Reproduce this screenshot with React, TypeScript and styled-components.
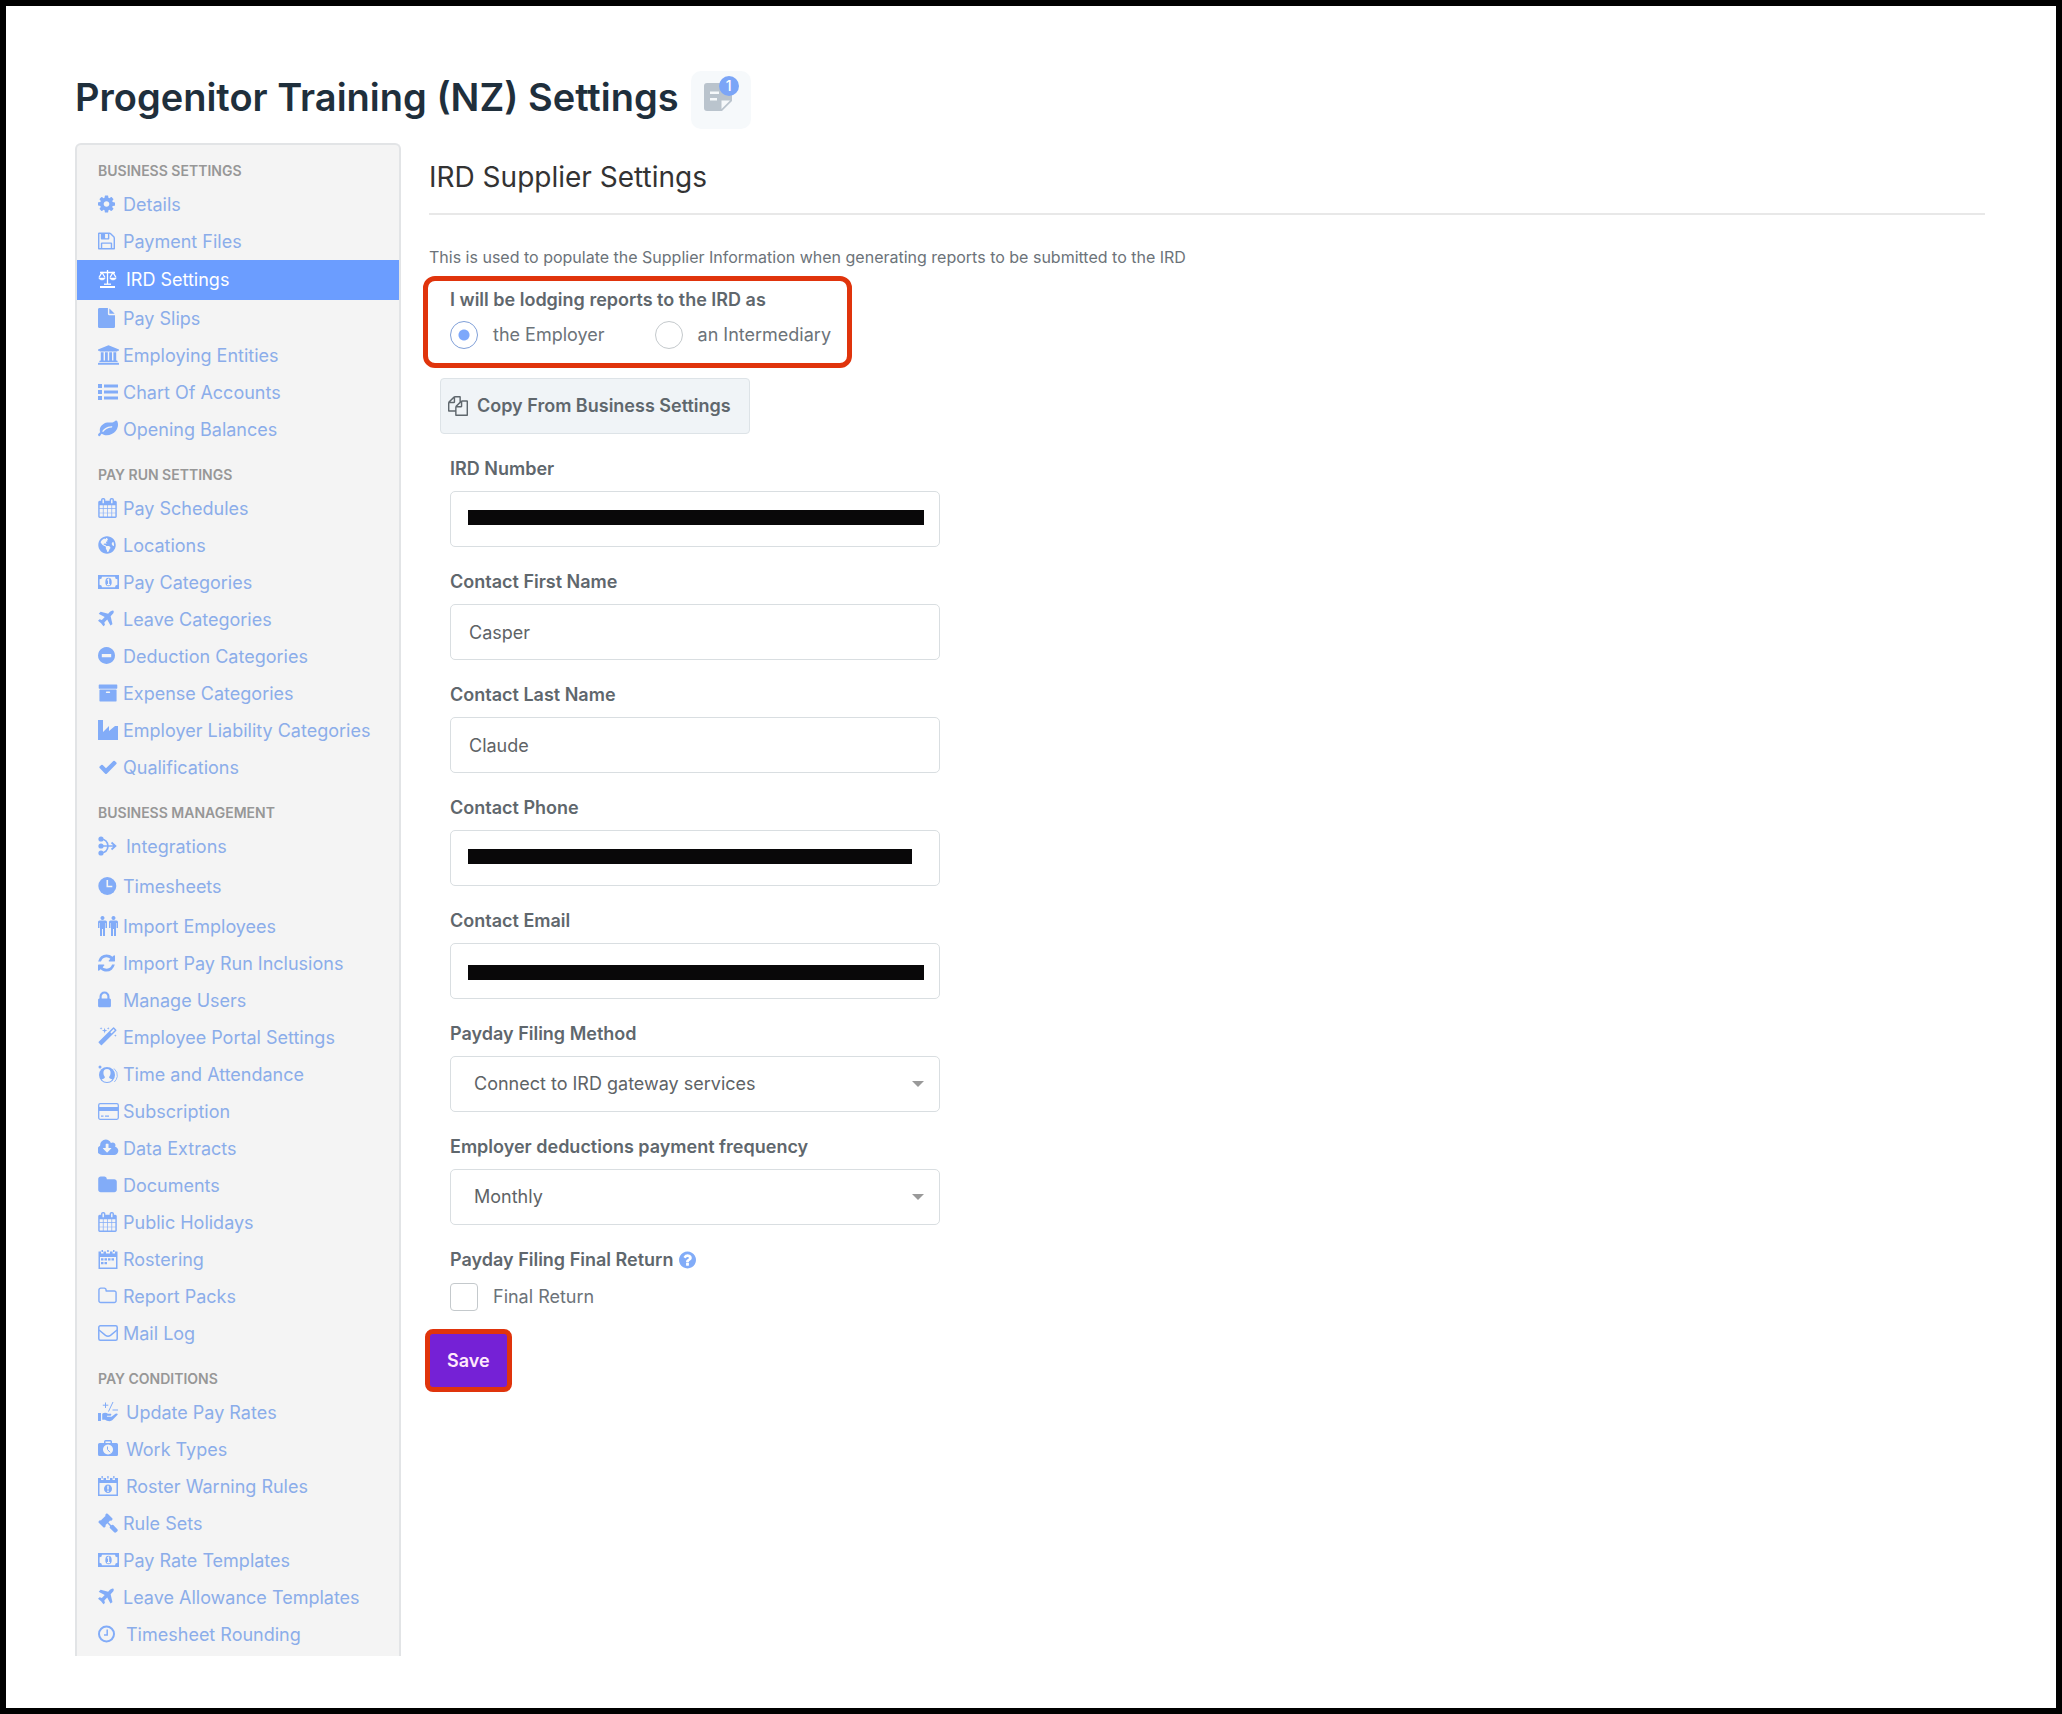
import React, { useId, useState } from 'react';
import styled, { createGlobalStyle } from 'styled-components';
import { FaGlobeAmericas } from 'react-icons/fa';

const color = {
  ink: '#1f2f3c',
  heading: '#333333',
  label: '#5f676d',
  text: '#6c7379',
  link: '#8badea',
  icon: '#82acf8',
  active: '#6b9dff',
  line: '#e2e4e6',
  panel: '#f4f4f4',
  alert: '#e0340c',
  save: '#7521d6',
};

const GlobalStyle = createGlobalStyle`
  *, *::before, *::after { box-sizing: border-box; }
  body {
    margin: 0;
    background: #ffffff;
    color: ${color.text};
    font-family: Inter, "Liberation Sans", sans-serif;
    font-size: 18px;
    line-height: 24px;
  }
  button, input, select { font: inherit; }
`;

/* ---------- icons ---------- */

const Svg = styled.svg`
  display: block;
  flex: none;
  fill: currentColor;
`;

/* Font glyphs are drawn on a 1792-unit grid; x and w trim the side bearing. */
const glyphs: Record<string, { x: number; w: number; d: string }> = {
  cog: { x: 128, w: 1536, d: 'M1152 896q0-106-75-181t-181-75-181 75-75 181 75 181 181 75 181-75 75-181zm512-109v222q0 12-8 23t-20 13l-185 28q-19 54-39 91 35 50 107 138 10 12 10 25t-9 23q-27 37-99 108t-94 71q-12 0-26-9l-138-108q-44 23-91 38-16 136-29 186-7 28-36 28h-222q-14 0-24.5-8.5t-11.5-21.5l-28-184q-49-16-90-37l-141 107q-10 9-25 9-14 0-25-11-126-114-165-168-7-10-7-23 0-12 8-23 15-21 51-66.5t54-70.5q-27-50-41-99l-183-27q-13-2-21-12.5t-8-23.5v-222q0-12 8-23t19-13l186-28q14-46 39-92-40-57-107-138-10-12-10-24 0-10 9-23 26-36 98.5-107.5t94.5-71.5q13 0 26 10l138 107q44-23 91-38 16-136 29-186 7-28 36-28h222q14 0 24.5 8.5t11.5 21.5l28 184q49 16 90 37l142-107q9-9 24-9 13 0 25 10 129 119 165 170 7 8 7 22 0 12-8 23-15 21-51 66.5t-54 70.5q26 50 41 98l183 28q13 2 21 12.5t8 23.5z' },
  floppy: { x: 128, w: 1536, d: 'M512 1536h768v-384h-768v384zm896 0h128v-896q0-14-10-38.5t-20-34.5l-281-281q-10-10-34-20t-39-10v416q0 40-28 68t-68 28h-576q-40 0-68-28t-28-68v-416h-128v1280h128v-416q0-40 28-68t68-28h832q40 0 68 28t28 68v416zm-384-928v-320q0-13-9.5-22.5t-22.5-9.5h-192q-13 0-22.5 9.5t-9.5 22.5v320q0 13 9.5 22.5t22.5 9.5h192q13 0 22.5-9.5t9.5-22.5zm640 32v928q0 40-28 68t-68 28h-1344q-40 0-68-28t-28-68v-1344q0-40 28-68t68-28h928q40 0 88 20t76 48l280 280q28 28 48 76t20 88z' },
  file: { x: 128, w: 1536, d: 'M1152 512v-472q22 14 36 28l408 408q14 14 28 36h-472zm-128 32q0 40 28 68t68 28h544v1056q0 40-28 68t-68 28h-1344q-40 0-68-28t-28-68v-1600q0-40 28-68t68-28h800v544z' },
  university: { x: 0, w: 1920, d: 'M960 0l960 384v128h-128q0 26-20.5 45t-48.5 19h-1526q-28 0-48.5-19t-20.5-45h-128v-128zm-704 640h256v768h128v-768h256v768h128v-768h256v768h128v-768h256v768h59q28 0 48.5 19t20.5 45v64h-1664v-64q0-26 20.5-45t48.5-19h59v-768zm1595 960q28 0 48.5 19t20.5 45v128h-1920v-128q0-26 20.5-45t48.5-19h1782z' },
  leaf: { x: 0, w: 1792, d: 'M1280 704q0-26-19-45t-45-19q-172 0-318 49.5t-259.5 134-235.5 219.5q-19 21-19 45 0 26 19 45t45 19q24 0 45-19 27-24 74-71t67-66q137-124 268.5-176t313.5-52q26 0 45-19t19-45zm512-198q0 95-20 193-46 224-184.5 383t-357.5 268q-214 108-438 108-148 0-286-47-15-5-88-42t-96-37q-16 0-39.5 32t-45 70-52.5 70-60 32q-43 0-63.5-17.5t-45.5-59.5q-2-4-6-11t-5.5-10-3-9.5-1.5-13.5q0-35 31-73.5t68-65.5 68-56 31-48q0-4-14-38t-16-44q-9-51-9-104 0-115 43.5-220t119-184.5 170.5-139 204-95.5q55-18 145-25.5t179.5-9 178.5-6 163.5-24 113.5-56.5l29.5-29.5 29.5-28 27-20 36.5-16 43.5-4.5q39 0 70.5 46t47.5 112 24 124 8 96z' },
  calendar: { x: 64, w: 1664, d: 'M192 1664h288v-288h-288v288zm352 0h320v-288h-320v288zm-352-352h288v-320h-288v320zm352 0h320v-320h-320v320zm-352-384h288v-288h-288v288zm736 736h320v-288h-320v288zm-384-736h320v-288h-320v288zm768 736h288v-288h-288v288zm-384-352h320v-320h-320v320zm-352-864v-288q0-13-9.5-22.5t-22.5-9.5h-64q-13 0-22.5 9.5t-9.5 22.5v288q0 13 9.5 22.5t22.5 9.5h64q13 0 22.5-9.5t9.5-22.5zm736 864h288v-320h-288v320zm-384-384h320v-288h-320v288zm384 0h288v-288h-288v288zm32-480v-288q0-13-9.5-22.5t-22.5-9.5h-64q-13 0-22.5 9.5t-9.5 22.5v288q0 13 9.5 22.5t22.5 9.5h64q13 0 22.5-9.5t9.5-22.5zm384-64v1280q0 52-38 90t-90 38h-1408q-52 0-90-38t-38-90v-1280q0-52 38-90t90-38h128v-96q0-66 47-113t113-47h64q66 0 113 47t47 113v96h384v-96q0-66 47-113t113-47h64q66 0 113 47t47 113v96h128q52 0 90 38t38 90z' },
  plane: { x: 192, w: 1408, d: 'M1568 160q44 52 12 148t-108 172l-161 161 160 696q5 19-12 33l-128 96q-7 6-19 6-4 0-7-1-15-3-21-16l-279-508-259 259 53 194q5 17-8 31l-96 96q-9 9-23 9h-2q-15-2-24-13l-189-252-252-189q-11-7-13-23-1-13 9-25l96-97q9-9 23-9 6 0 8 1l194 53 259-259-508-279q-14-8-17-24-2-16 9-27l128-128q14-13 30-8l665 159 160-160q76-76 172-108t148 12z' },
  archive: { x: 0, w: 1792, d: 'M1088 832q0-26-19-45t-45-19h-256q-26 0-45 19t-19 45 19 45 45 19h256q26 0 45-19t19-45zm576-192v960q0 26-19 45t-45 19h-1408q-26 0-45-19t-19-45v-960q0-26 19-45t45-19h1408q26 0 45 19t19 45zm64-448v256q0 26-19 45t-45 19h-1536q-26 0-45-19t-19-45v-256q0-26 19-45t45-19h1536q26 0 45 19t19 45z' },
  check: { x: 0, w: 1792, d: 'M1671 566q0 40-28 68l-724 724-136 136q-28 28-68 28t-68-28l-136-136-362-362q-28-28-28-68t28-68l136-136q28-28 68-28t68 28l294 295 656-657q28-28 68-28t68 28l136 136q28 28 28 68z' },
  refresh: { x: 128, w: 1536, d: 'M1639 1056q0 5-1 7-64 268-268 434.5t-478 166.5q-146 0-282.5-55t-243.5-157l-129 129q-19 19-45 19t-45-19-19-45v-448q0-26 19-45t45-19h448q26 0 45 19t19 45-19 45l-137 137q71 66 161 102t187 36q134 0 250-65t186-179q11-17 53-117 8-23 30-23h192q13 0 22.5 9.5t9.5 22.5zm25-800v448q0 26-19 45t-45 19h-448q-26 0-45-19t-19-45 19-45l138-138q-148-137-349-137-134 0-250 65t-186 179q-11 17-53 117-8 23-30 23h-199q-13 0-22.5-9.5t-9.5-22.5v-7q65-268 270-434.5t480-166.5q146 0 284 55.5t245 156.5l130-129q19-19 45-19t45 19 19 45z' },
  lock: { x: 320, w: 1152, d: 'M640 768h512v-192q0-106-75-181t-181-75-181 75-75 181v192zm832 96v576q0 40-28 68t-68 28h-960q-40 0-68-28t-28-68v-576q0-40 28-68t68-28h32v-192q0-184 132-316t316-132 316 132 132 316v192h32q40 0 68 28t28 68z' },
  magic: { x: 64, w: 1664, d: 'M1254 581l293-293-107-107-293 293zm447-293q0 27-18 45l-1286 1286q-18 18-45 18t-45-18l-198-198q-18-18-18-45t18-45l1286-1286q18-18 45-18t45 18l198 198q18 18 18 45zm-1351-190l98 30-98 30-30 98-30-98-98-30 98-30 30-98zm350 162l196 60-196 60-60 196-60-196-196-60 196-60 60-196zm930 478l98 30-98 30-30 98-30-98-98-30 98-30 30-98zm-640-640l98 30-98 30-30 98-30-98-98-30 98-30 30-98z' },
  cloud: { x: 0, w: 1920, d: 'M1216 928q0-14-9-23t-23-9h-224v-352q0-13-9.5-22.5t-22.5-9.5h-192q-13 0-22.5 9.5t-9.5 22.5v352h-224q-13 0-22.5 9.5t-9.5 22.5q0 14 9 23l352 352q9 9 23 9t23-9l351-351q10-12 10-24zm640 224q0 159-112.5 271.5t-271.5 112.5h-1088q-185 0-316.5-131.5t-131.5-316.5q0-130 70-240t188-165q-2-30-2-43 0-212 150-362t362-150q156 0 285.5 87t188.5 231q71-62 166-62 106 0 181 75t75 181q0 76-41 138 130 31 213.5 135.5t83.5 238.5z' },
  folder: { x: 64, w: 1664, d: 'M1728 608v704q0 92-66 158t-158 66h-1216q-92 0-158-66t-66-158v-960q0-92 66-158t158-66h320q92 0 158 66t66 158v32h672q92 0 158 66t66 158z' },
  folderOpen: { x: 64, w: 1664, d: 'M1600 1312v-704q0-40-28-68t-68-28h-704q-40 0-68-28t-28-68v-64q0-40-28-68t-68-28h-320q-40 0-68 28t-28 68v960q0 40 28 68t68 28h1216q40 0 68-28t28-68zm128-704v704q0 92-66 158t-158 66h-1216q-92 0-158-66t-66-158v-960q0-92 66-158t158-66h320q92 0 158 66t66 158v32h672q92 0 158 66t66 158z' },
  gavel: { x: 0, w: 1792, d: 'M1771 1536q0 53-37 90l-107 108q-39 37-91 37-53 0-90-37l-363-364q-38-36-38-90 0-53 43-96l-256-256-126 126q-14 14-34 14t-34-14q2 2 12.5 12t12.5 13 10 11.5 10 13.5 6 13.5 5.5 16.5 1.5 18q0 38-28 68-3 3-16.5 18t-19 20.5-18.5 16.5-22 15.5-22 9-26 4.5q-40 0-68-28l-408-408q-28-28-28-68 0-13 4.5-26t9-22 15.5-22 16.5-18.5 20.5-19 18-16.5q30-28 68-28 10 0 18 1.5t16.5 5.5 13.5 6 13.5 10 11.5 10 13 12.5 12 12.5q-14-14-14-34t14-34l348-348q14-14 34-14t34 14q-2-2-12.5-12t-12.5-13-10-11.5-10-13.5-6-13.5-5.5-16.5-1.5-18q0-38 28-68 3-3 16.5-18t19-20.5 18.5-16.5 22-15.5 22-9 26-4.5q40 0 68 28l408 408q28 28 28 68 0 13-4.5 26t-9 22-15.5 22-16.5 18.5-20.5 19-18 16.5q-30 28-68 28-10 0-18-1.5t-16.5-5.5-13.5-6-13.5-10-11.5-10-13-12.5-12-12.5q14 14 14 34t-14 34l-126 126 256 256q43-43 96-43 52 0 91 37l363 363q37 39 37 91z' },
  copy: { x: 0, w: 1792, d: 'M1696 384q40 0 68 28t28 68v1216q0 40-28 68t-68 28h-960q-40 0-68-28t-28-68v-288h-544q-40 0-68-28t-28-68v-672q0-40 20-88t48-76l408-408q28-28 76-48t88-20h416q40 0 68 28t28 68v328q68-40 128-40h416zm-544 213l-299 299h299v-299zm-640-384l-299 299h299v-299zm196 647l316-316v-416h-384v416q0 40-28 68t-68 28h-416v640h512v-256q0-40 20-88t48-76zm956 804v-1152h-384v416q0 40-28 68t-68 28h-416v640h896z' },
  question: { x: 128, w: 1536, d: 'M1024 1376v-192q0-14-9-23t-23-9h-192q-14 0-23 9t-9 23v192q0 14 9 23t23 9h192q14 0 23-9t9-23zm256-672q0-88-55.5-163t-138.5-116-170-41q-243 0-371 213-15 24 8 42l132 100q7 6 19 6 16 0 25-12 53-68 86-92 34-24 86-24 48 0 85.5 26t37.5 59q0 38-20 61t-68 45q-63 28-115.5 86.5t-52.5 125.5v36q0 14 9 23t23 9h192q14 0 23-9t9-23q0-19 21.5-49.5t54.5-49.5q32-18 49-28.5t46-35 44.5-48 28-60.5 12.5-81zm384 192q0 209-103 385.5t-279.5 279.5-385.5 103-385.5-103-279.5-279.5-103-385.5 103-385.5 279.5-279.5 385.5-103 385.5 103 279.5 279.5 103 385.5z' },
};

const drawings: Record<string, React.ReactNode> = {
  scales: (
    <g fill="none" stroke="currentColor" strokeWidth="1.3">
      <path d="M9.5 1v14M2 3.5h15M1 8.5L4 3.5l3 5M12 8.5l3-5 3 5" />
      <path d="M.8 9h6.4q-.6 2-3.2 2T.8 9zM11.8 9h6.4q-.6 2-3.2 2t-3.2-2z" fill="currentColor" strokeWidth=".5" />
      <path d="M6 15.2h7" />
      <path d="M2 18h15" strokeWidth="2" />
    </g>
  ),
  list: <path d="M0 2h4v4H0zM0 8h4v4H0zM0 14h4v4H0zM6 2.600h14v3H6zM6 8.600h14v3H6zM6 14.600h14v3H6z" />,
  globe: <FaGlobeAmericas x={0} y={1} size={18} />,
  money: (
    <g>
      <path fillRule="evenodd" d="M0 3h21v14H0zM4 4.700Q4 7.200 1.600 7.200v5.600q2.400 0 2.400 2.500h13q0-2.500 2.400-2.500V7.200Q17 7.200 17 4.700z" />
      <ellipse cx="10.5" cy="10" rx="3.200" ry="4.300" />
      <path d="M9.200 8.200l1.400-1v5M9 12.600h3" fill="none" stroke={color.panel} strokeWidth="1.200" />
    </g>
  ),
  minus: <path fillRule="evenodd" d="M8.500 1a8.500 8.500 0 1 0 .01 0zM3.800 8h9.400v3.200H3.800z" />,
  industry: <path d="M0 0h5v12l6-6v5l6-5h3v14H0z" />,
  merge: (
    <g>
      <circle cx="3" cy="3" r="2.600" />
      <circle cx="3" cy="10" r="2.600" />
      <circle cx="3" cy="17" r="2.600" />
      <path d="M3 3q6.500.5 7 7-.5 6.500-7 7M3 10h14M13.500 6.500L17.500 10l-4 3.500" fill="none" stroke="currentColor" strokeWidth="1.700" />
    </g>
  ),
  clock: (
    <g>
      <circle cx="9.300" cy="10" r="9" />
      <path d="M9.300 4v6.500h5" fill="none" stroke={color.panel} strokeWidth="1.600" />
    </g>
  ),
  people: (
    <g>
      {[0, 11].map((x) => (
        <path key={x} transform={`translate(${x} 0)`} d="M4.500 0a2 2 0 1 1-.01 0zM1.500 4.500h6q1.500 0 1.500 1.500v6H7.500V7H7v13H5v-7H4v7H2V7h-.5v5H0V6q0-1.500 1.500-1.500z" />
      ))}
    </g>
  ),
  attendance: (
    <g>
      <circle cx="9" cy="11" r="8" />
      <path d="M9 5q3.600 0 3.600 4 0 2.600-1.600 4.300.2 1.500 3.400 2.200-2 2.500-5.400 2.500t-5.400-2.500q3.200-.7 3.400-2.200Q5.400 11.600 5.400 9q0-4 3.600-4z" fill={color.panel} />
      <path d="M16 4.500q4 3.500 3.300 8-.8 3.500-3 5.500" fill="none" stroke="currentColor" strokeWidth=".800" />
      <circle cx="2" cy="3" r="1.500" />
    </g>
  ),
  card: (
    <g>
      <rect x=".700" y="2.700" width="19.600" height="15.600" rx="1.500" fill="none" stroke="currentColor" strokeWidth="1.300" />
      <path d="M1 6h19v4H1zM3 14.500h2.500v1.300H3zM7 14.500h4v1.300H7z" />
    </g>
  ),
  roster: (
    <g>
      <path fillRule="evenodd" d="M.5 2.500h2.500v2h2.500v-2h2.500v2h4v-2h2.500v2H17v-2h2.500V20H.5zM2 8v10.500h16V8z" />
      <path d="M3.500 1h1.500v2H3.500zM9.200 1h1.500v2H9.200zM15 1h1.500v2H15z" />
      <path d="M3 9.200h2.500v2.200H3zM6.500 9.200H9v2.200H6.500zM10 9.200h2.500v2.200H10zM13.500 9.200H16v2.200h-2.500zM3 13h2.500v2.200H3zM6.500 13H9v2.200H6.500z" />
    </g>
  ),
  mail: (
    <g fill="none" stroke="currentColor" strokeWidth="1.500">
      <rect x=".800" y="2.800" width="18.400" height="14.400" rx="1.500" />
      <path d="M1 7l6.500 5.300q2.500 1.900 5 0L19 7" />
    </g>
  ),
  rates: (
    <g>
      <path d="M0 11h3v8H0zM4.200 11.800q3-2.300 5.800 0h3q1 1-.4 1.900H9v1h4.500l4-2.900q2-.7 2.300.8l-5.300 5.500q-1 1-3 1.100-3-.2-4.500-1.400H4.200z" />
      <path d="M7.500.500v5.500M4.800 3.200h5.500M15 0l-4.500 9.500M14.500 8H20" fill="none" stroke="currentColor" strokeWidth="1" />
    </g>
  ),
  work: (
    <g>
      <path fillRule="evenodd" d="M6 4V2.500Q6 1 7.500 1h5Q14 1 14 2.500V4h4.500Q20 4 20 5.500v10q0 1.500-1.500 1.500h-17Q0 17 0 15.500v-10Q0 4 1.500 4zM7.500 2.500V4h5V2.500zM10 5.500a5 5 0 1 0 .01 0z" />
      <path d="M9.500 7.500v3l2.500 2.700" fill="none" stroke="currentColor" strokeWidth="1" />
    </g>
  ),
  warning: (
    <g>
      <path fillRule="evenodd" d="M0 2h3v2h2.500V2h2.500v2h4V2h2.500v2H17V2h3v18H0zM1.500 7v11.500h17V7z" />
      <path d="M3.500 0h1.300v2.500H3.500zM9.300 0h1.300v2.500H9.300zM15.200 0h1.300v2.500h-1.300z" />
      <ellipse cx="10" cy="12.700" rx="4" ry="4.300" />
      <path d="M10 9.700v3.800M10 14.500v1.500" stroke={color.panel} strokeWidth="1.500" />
    </g>
  ),
  clockOpen: (
    <g fill="none" stroke="currentColor">
      <circle cx="8.500" cy="10" r="7.500" strokeWidth="2" />
      <path d="M9.200 5.500v5.500H6" strokeWidth="1.500" />
    </g>
  ),
};

function Icon({ name, size = 20 }: { name: string; size?: number }) {
  const glyph = glyphs[name];
  if (glyph) {
    return (
      <Svg viewBox={`${glyph.x} 0 ${glyph.w} 1792`} width={Math.round((glyph.w / 1792) * size)} height={size} aria-hidden="true">
        <path d={glyph.d} />
      </Svg>
    );
  }
  return (
    <Svg viewBox="0 0 21 20" width={21} height={20} aria-hidden="true">
      {drawings[name]}
    </Svg>
  );
}

/* ---------- page frame ---------- */

const Page = styled.div`
  min-height: 100vh;
  padding: 65px 71px 52px 69px;
  border: 6px solid #000000;
  background: #ffffff;
`;

const TitleBar = styled.header`
  display: flex;
  align-items: flex-start;
  gap: 12px;
  margin-bottom: 14px;
`;

const PageTitle = styled.h1`
  margin: 0;
  color: ${color.ink};
  font-size: 38px;
  font-weight: 600;
  line-height: 52px;
`;

const NotesButton = styled.button`
  position: relative;
  display: grid;
  place-items: center;
  width: 60px;
  height: 58px;
  padding: 0 6px 6px 0;
  border: 0;
  border-radius: 10px;
  background: #f6f9fb;
  color: #bac4cd;
`;

const NotesBadge = styled.span`
  position: absolute;
  top: 5px;
  right: 12px;
  width: 20px;
  height: 20px;
  border-radius: 50%;
  background: #7ba5f7;
  color: #ffffff;
  font-size: 14px;
  font-weight: 500;
  line-height: 20px;
  text-align: center;
`;

const Columns = styled.div`
  display: grid;
  grid-template-columns: 326px minmax(0, 1fr);
  gap: 28px;
`;

/* ---------- sidebar ---------- */

const Sidebar = styled.nav`
  padding-bottom: 2px;
  border: 2px solid ${color.line};
  border-bottom: 0;
  border-radius: 6px 6px 0 0;
  background: ${color.panel};
`;

const NavHeading = styled.h2`
  margin: 0;
  padding: 10px 21px 0;
  color: #979797;
  font-size: 14px;
  font-weight: 600;
  line-height: 31px;
  text-transform: uppercase;
`;

const NavList = styled.ul`
  margin: 0;
  padding: 0 0 1px;
  list-style: none;
`;

const NavLink = styled.a<{ $active?: boolean; $tall?: boolean }>`
  display: flex;
  align-items: center;
  height: ${(p) => (p.$active || p.$tall ? 40 : 37)}px;
  padding: ${(p) => (p.$tall ? 3 : 0)}px 0 0 21px;
  background: ${(p) => (p.$active ? color.active : 'transparent')};
  color: ${(p) => (p.$active ? '#ffffff' : color.link)};
  text-decoration: none;
  white-space: nowrap;
`;

const NavIcon = styled.span<{ $active?: boolean; $wide?: boolean }>`
  flex: none;
  width: ${(p) => (p.$wide ? 28 : 25)}px;
  padding-bottom: 2px;
  color: ${(p) => (p.$active ? '#ffffff' : color.icon)};
`;

type Item = { label: string; icon: string; wide?: boolean; tall?: boolean; active?: boolean };

const sections: { title: string; items: Item[] }[] = [
  {
    title: 'Business Settings',
    items: [
      { label: 'Details', icon: 'cog' },
      { label: 'Payment Files', icon: 'floppy' },
      { label: 'IRD Settings', icon: 'scales', wide: true, active: true },
      { label: 'Pay Slips', icon: 'file' },
      { label: 'Employing Entities', icon: 'university' },
      { label: 'Chart Of Accounts', icon: 'list' },
      { label: 'Opening Balances', icon: 'leaf' },
    ],
  },
  {
    title: 'Pay Run Settings',
    items: [
      { label: 'Pay Schedules', icon: 'calendar' },
      { label: 'Locations', icon: 'globe' },
      { label: 'Pay Categories', icon: 'money' },
      { label: 'Leave Categories', icon: 'plane' },
      { label: 'Deduction Categories', icon: 'minus' },
      { label: 'Expense Categories', icon: 'archive' },
      { label: 'Employer Liability Categories', icon: 'industry' },
      { label: 'Qualifications', icon: 'check' },
    ],
  },
  {
    title: 'Business Management',
    items: [
      { label: 'Integrations', icon: 'merge', wide: true },
      { label: 'Timesheets', icon: 'clock', tall: true },
      { label: 'Import Employees', icon: 'people', tall: true },
      { label: 'Import Pay Run Inclusions', icon: 'refresh' },
      { label: 'Manage Users', icon: 'lock' },
      { label: 'Employee Portal Settings', icon: 'magic' },
      { label: 'Time and Attendance', icon: 'attendance' },
      { label: 'Subscription', icon: 'card' },
      { label: 'Data Extracts', icon: 'cloud' },
      { label: 'Documents', icon: 'folder' },
      { label: 'Public Holidays', icon: 'calendar' },
      { label: 'Rostering', icon: 'roster' },
      { label: 'Report Packs', icon: 'folderOpen' },
      { label: 'Mail Log', icon: 'mail' },
    ],
  },
  {
    title: 'Pay Conditions',
    items: [
      { label: 'Update Pay Rates', icon: 'rates', wide: true },
      { label: 'Work Types', icon: 'work', wide: true },
      { label: 'Roster Warning Rules', icon: 'warning', wide: true },
      { label: 'Rule Sets', icon: 'gavel' },
      { label: 'Pay Rate Templates', icon: 'money' },
      { label: 'Leave Allowance Templates', icon: 'plane' },
      { label: 'Timesheet Rounding', icon: 'clockOpen', wide: true },
    ],
  },
];

/* ---------- form ---------- */

const SectionTitle = styled.h2`
  margin: 14px 0 30px;
  padding-bottom: 16px;
  border-bottom: 2px solid #e8e8e8;
  color: ${color.heading};
  font-size: 28px;
  font-weight: 400;
  line-height: 40px;
`;

const Intro = styled.p`
  margin: 0 0 7px;
  font-size: 16px;
`;

const Form = styled.form`
  display: flex;
  flex-direction: column;
  align-items: flex-start;
  padding-left: 21px;
`;

const Lodging = styled.fieldset`
  display: flex;
  flex-direction: column;
  gap: 9px;
  margin: 0 0 10px -27px;
  padding: 7px 16px 14px 22px;
  border: 5px solid ${color.alert};
  border-radius: 12px;
`;

const GroupLabel = styled.span`
  display: flex;
  align-items: center;
  gap: 6px;
  color: ${color.label};
  font-weight: 600;
`;

const Options = styled.div`
  display: flex;
  gap: 50px;
`;

const Choice = styled.label`
  display: flex;
  align-items: center;
  gap: 15px;
  line-height: 28px;
`;

const Radio = styled.input`
  appearance: none;
  width: 28px;
  height: 28px;
  margin: 0;
  border: 1px solid #c4c9cc;
  border-radius: 50%;
  background: #ffffff;

  &:checked {
    border-color: #7f9fd8;
    background: radial-gradient(circle, #7da8fb 5px, #ffffff 6px);
  }
`;

const Checkbox = styled.input`
  appearance: none;
  width: 28px;
  height: 28px;
  margin: 0;
  border: 1px solid #c4c9cc;
  border-radius: 4px;
  background: #ffffff;

  &:checked {
    background: #7da8fb;
  }
`;

const CopyButton = styled.button`
  display: flex;
  align-items: center;
  gap: 9px;
  height: 56px;
  margin: 0 0 23px -10px;
  padding: 0 18px 0 7px;
  border: 1px solid #dde3e7;
  border-radius: 4px;
  background: #f0f4f7;
  color: ${color.label};
  font-weight: 600;
`;

const Field = styled.div`
  display: flex;
  flex-direction: column;
  gap: 10px;
  width: 100%;
  max-width: 490px;
  margin-bottom: 23px;
`;

const FieldLabel = styled.label`
  color: ${color.label};
  font-weight: 600;
`;

const Control = styled.div`
  position: relative;
`;

const TextInput = styled.input`
  display: block;
  width: 100%;
  height: 56px;
  padding: 0 18px;
  border: 1px solid #d9dee1;
  border-radius: 5px;
  background: #ffffff;
  color: #5e6366;
`;

const Redaction = styled.span<{ $end: number; $top: number }>`
  position: absolute;
  top: ${(p) => p.$top}px;
  left: 18px;
  right: ${(p) => p.$end}px;
  height: 15px;
  background: #090809;
`;

const Select = styled.select`
  appearance: none;
  display: block;
  width: 100%;
  height: 56px;
  padding: 0 48px 0 23px;
  border: 1px solid #d9dee1;
  border-radius: 5px;
  background: #ffffff;
  color: #5e6366;
`;

const Caret = styled.span`
  position: absolute;
  top: 25px;
  right: 16px;
  border: 6px solid transparent;
  border-top-color: #999999;
  border-bottom: 0;
  pointer-events: none;
`;

const CheckGroup = styled.div`
  display: flex;
  flex-direction: column;
  gap: 11px;
  margin-bottom: 18px;
`;

const Help = styled.span`
  color: #82acf8;
`;

const SaveButton = styled.button`
  height: 63px;
  margin-left: -25px;
  padding: 0 17px;
  border: 5px solid ${color.alert};
  border-radius: 8px;
  background: ${color.save};
  color: #ffe9fb;
  font-weight: 600;
`;

function InputField({ label, value = '', cover }: { label: string; value?: string; cover?: { top: number; end: number } }) {
  const id = useId();
  return (
    <Field>
      <FieldLabel htmlFor={id}>{label}</FieldLabel>
      <Control>
        <TextInput id={id} type="text" defaultValue={value} />
        {cover && <Redaction $top={cover.top} $end={cover.end} />}
      </Control>
    </Field>
  );
}

function SelectField({ label, options }: { label: string; options: string[] }) {
  const id = useId();
  return (
    <Field>
      <FieldLabel htmlFor={id}>{label}</FieldLabel>
      <Control>
        <Select id={id}>
          {options.map((option) => (
            <option key={option}>{option}</option>
          ))}
        </Select>
        <Caret />
      </Control>
    </Field>
  );
}

export default function App() {
  const [role, setRole] = useState('employer');
  return (
    <>
      <GlobalStyle />
      <Page>
        <TitleBar>
          <PageTitle>Progenitor Training (NZ) Settings</PageTitle>
          <NotesButton type="button">
            <Svg viewBox="0 0 28 28" width={28} height={28} aria-hidden="true">
              <path d="M3 0h22q3 0 3 3v15L18 28H3q-3 0-3-3V3q0-3 3-3z" />
              <path d="M6 8.500h9v2.600H6zM6 15h7v2.600H6zM17.500 26V17.500H26z" fill="#f6f9fb" />
            </Svg>
            <NotesBadge>1</NotesBadge>
          </NotesButton>
        </TitleBar>
        <Columns>
          <Sidebar>
            {sections.map((section) => (
              <React.Fragment key={section.title}>
                <NavHeading>{section.title}</NavHeading>
                <NavList>
                  {section.items.map((item) => (
                    <li key={item.label}>
                      <NavLink href="#" $active={item.active} $tall={item.tall}>
                        <NavIcon $active={item.active} $wide={item.wide}>
                          <Icon name={item.icon} />
                        </NavIcon>
                        {item.label}
                      </NavLink>
                    </li>
                  ))}
                </NavList>
              </React.Fragment>
            ))}
          </Sidebar>
          <main>
            <SectionTitle>IRD Supplier Settings</SectionTitle>
            <Intro>This is used to populate the Supplier Information when generating reports to be submitted to the IRD</Intro>
            <Form onSubmit={(event) => event.preventDefault()}>
              <Lodging aria-labelledby="lodging-label">
                <GroupLabel id="lodging-label">I will be lodging reports to the IRD as</GroupLabel>
                <Options>
                  <Choice>
                    <Radio type="radio" name="role" checked={role === 'employer'} onChange={() => setRole('employer')} />
                    the Employer
                  </Choice>
                  <Choice>
                    <Radio type="radio" name="role" checked={role === 'intermediary'} onChange={() => setRole('intermediary')} />
                    an Intermediary
                  </Choice>
                </Options>
              </Lodging>
              <CopyButton type="button">
                <Icon name="copy" />
                Copy From Business Settings
              </CopyButton>
              <InputField label="IRD Number" cover={{ top: 19, end: 16 }} />
              <InputField label="Contact First Name" value="Casper" />
              <InputField label="Contact Last Name" value="Claude" />
              <InputField label="Contact Phone" cover={{ top: 19, end: 28 }} />
              <InputField label="Contact Email" cover={{ top: 22, end: 16 }} />
              <SelectField label="Payday Filing Method" options={['Connect to IRD gateway services']} />
              <SelectField label="Employer deductions payment frequency" options={['Monthly']} />
              <CheckGroup>
                <GroupLabel>
                  Payday Filing Final Return
                  <Help>
                    <Icon name="question" />
                  </Help>
                </GroupLabel>
                <Choice>
                  <Checkbox type="checkbox" />
                  Final Return
                </Choice>
              </CheckGroup>
              <SaveButton type="submit">Save</SaveButton>
            </Form>
          </main>
        </Columns>
      </Page>
    </>
  );
}
